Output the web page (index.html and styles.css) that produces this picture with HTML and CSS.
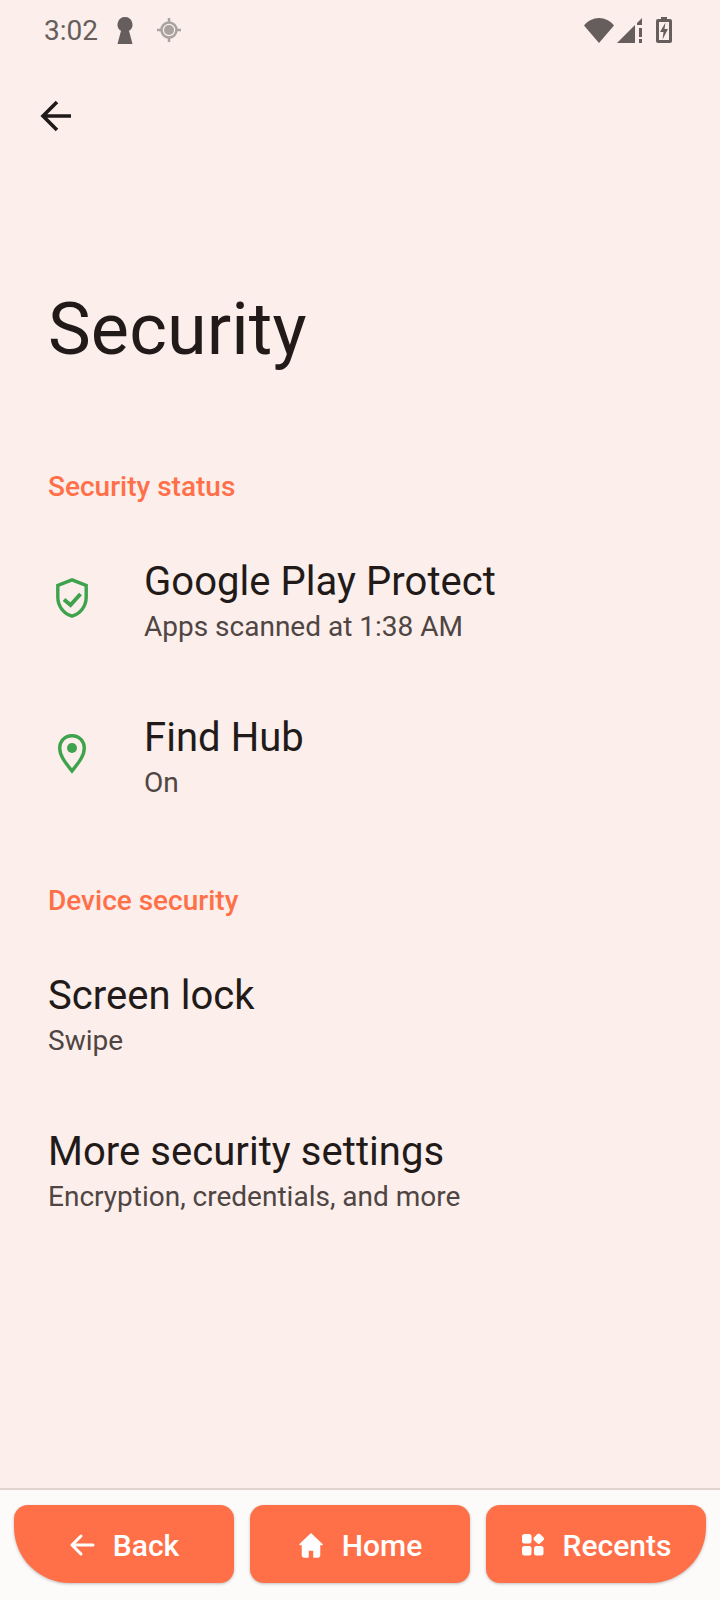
FILE: index.html
```html
<!DOCTYPE html>
<html lang="en">
<head>
    <meta charset="UTF-8">
    <meta name="viewport" content="width=device-width, initial-scale=1.0">
    <title>Security</title>
    <link rel="stylesheet" href="styles.css">
</head>
<body>
    <div class="status-bar">
        <div class="status-left">
            <span class="status-time">3:02</span>
            <svg width="16" height="27" viewBox="0 0 16 27"><path d="M8 0a7.500 7.500 0 0 0-4 13.800L.5 27h15L12 13.800A7.500 7.500 0 0 0 8 0z" fill="#655e5c"/></svg>
            <svg class="gps" width="24" height="24" viewBox="0 0 24 24"><g fill="none" stroke="#a8a2a0" stroke-width="2.500"><circle cx="12" cy="12" r="7.500"/><path d="M12 0v4M12 20v4M0 12h4M20 12h4"/></g><circle cx="12" cy="12" r="5" fill="#a8a2a0"/></svg>
        </div>
        <div class="status-right">
            <svg width="30" height="25" viewBox="0 0 30 25"><path d="M0 7.500C4 2.800 9 0 15 0s11 2.800 15 7.500L15 25z" fill="#655e5c"/></svg>
            <svg width="25" height="25" viewBox="0 0 25 25"><path d="M0 25L18 7v18z" fill="#655e5c"/><path d="M20 5l5-5v7h-5zM22 10h3v9h-3zM22 21h3v4h-3z" fill="#655e5c"/></svg>
            <svg class="battery" width="16" height="26" viewBox="0 0 16 26"><path fill-rule="evenodd" d="M5 0h6v2h3a2 2 0 0 1 2 2v20a2 2 0 0 1-2 2H2a2 2 0 0 1-2-2V4a2 2 0 0 1 2-2h3zM3 5v18h10V5z" fill="#655e5c"/><path d="M9.500 5.500L4 15h3.500L6.500 22.500 12 12H8.500z" fill="#655e5c"/></svg>
        </div>
    </div>

    <div class="app-bar">
        <svg width="36" height="34" viewBox="0 0 36 34"><path d="M33 17H5M19 3L5 17l14 14" fill="none" stroke="#1f1a19" stroke-width="3.600"/></svg>
    </div>

    <main class="content">
        <h1 class="page-title">Security</h1>

        <div class="section-label first">Security status</div>
        <div class="row">
            <div class="row-icon">
                <svg width="32" height="40" viewBox="0 0 32 40"><path d="M16 1.800L1.800 7.500v11.500c0 9.500 6 16.700 14.200 19.200 8.200-2.500 14.200-9.700 14.200-19.200V7.500z" fill="none" stroke="#3fa34d" stroke-width="3.400"/><path d="M8 21.500l6.500 5.500 10-11" fill="none" stroke="#3fa34d" stroke-width="4"/></svg>
            </div>
            <div>
                <div class="row-title">Google Play Protect</div>
                <div class="row-sub">Apps scanned at 1:38 AM</div>
            </div>
        </div>
        <div class="row">
            <div class="row-icon">
                <svg width="28" height="40" viewBox="0 0 28 40"><path d="M14 1.700C6.500 1.700 1.700 7.500 1.700 14c0 8 6 15 12.300 23 6.300-8 12.300-15 12.300-23C26.300 7.500 21.500 1.700 14 1.700z" fill="none" stroke="#3fa34d" stroke-width="3.400"/><circle cx="14" cy="14" r="5" fill="#3fa34d"/></svg>
            </div>
            <div>
                <div class="row-title">Find Hub</div>
                <div class="row-sub">On</div>
            </div>
        </div>

        <div class="section-label">Device security</div>
        <div class="row plain">
            <div>
                <div class="row-title">Screen lock</div>
                <div class="row-sub">Swipe</div>
            </div>
        </div>
        <div class="row plain">
            <div>
                <div class="row-title">More security settings</div>
                <div class="row-sub">Encryption, credentials, and more</div>
            </div>
        </div>
    </main>

    <nav class="bottom-nav">
        <button class="nav-button back">
            <svg width="26" height="24" viewBox="0 0 26 24"><path d="M24 12H3M12 3l-9 9 9 9" fill="none" stroke="#fff" stroke-width="3" stroke-linecap="round" stroke-linejoin="round"/></svg>
            Back
        </button>
        <button class="nav-button">
            <svg width="26" height="26" viewBox="0 0 26 26"><path d="M13 2L2 12.500h2.500V23a2 2 0 0 0 2 2H10v-7h6v7h3.500a2 2 0 0 0 2-2V12.500H24z" fill="#fff" stroke="#fff" stroke-width="1.500" stroke-linejoin="round"/></svg>
            Home
        </button>
        <button class="nav-button recents">
            <svg width="24" height="24" viewBox="0 0 24 24"><g fill="#fff"><rect x="1" y="1" width="9.500" height="9.500" rx="2.500"/><rect x="1" y="13" width="9.500" height="9.500" rx="2.500"/><rect x="13" y="13" width="9.500" height="9.500" rx="2.500"/><rect x="13.500" y="1.500" width="8.500" height="8.500" rx="2" transform="rotate(45 17.750 5.750)"/></g></svg>
            Recents
        </button>
    </nav>
</body>
</html>
```

FILE: styles.css
```css
html, body {
    margin: 0;
    padding: 0;
}
body {
    width: 720px;
    height: 1600px;
    display: flex;
    flex-direction: column;
    font-family: Roboto, sans-serif;
    background-color: #fbeeeb;
    color: #211a18;
    overflow: hidden;
}
.status-bar {
    height: 60px;
    display: flex;
    justify-content: space-between;
    align-items: center;
    padding: 0 48px 0 44px;
    flex-shrink: 0;
}
.status-left, .status-right {
    display: flex;
    align-items: center;
}
.status-time {
    font-size: 28px;
    color: #655e5c;
    margin-right: 19px;
}
.gps {
    margin-left: 24px;
}
.status-right {
    gap: 3px;
}
.battery {
    margin-left: 11px;
}
.app-bar {
    height: 112px;
    display: flex;
    align-items: center;
    padding-left: 38px;
    flex-shrink: 0;
}
.content {
    flex: 1;
    padding: 0 48px;
}
.page-title {
    font-size: 72px;
    font-weight: 400;
    line-height: 88px;
    letter-spacing: 0.1px;
    margin: 114px 0 0 0;
}
.section-label {
    font-size: 28px;
    font-weight: 500;
    line-height: 36px;
    color: #ff7049;
    margin-top: 47px;
    margin-bottom: 19px;
}
.section-label.first {
    margin-top: 95px;
}
.row {
    display: flex;
    align-items: center;
    height: 156px;
}
.row-icon {
    width: 48px;
    margin-right: 48px;
    margin-bottom: 9px;
    display: flex;
    justify-content: center;
}
.row-title {
    font-size: 40px;
    line-height: 50px;
    letter-spacing: 0.05px;
}
.row-sub {
    font-size: 28px;
    line-height: 40px;
    color: #4f4543;
}
.bottom-nav {
    height: 112px;
    flex-shrink: 0;
    display: flex;
    gap: 16px;
    padding: 15px 14px 0;
    box-sizing: border-box;
    background-color: #fdfafa;
    border-top: 2px solid #e2d3d0;
}
.nav-button {
    flex: 1;
    height: 78px;
    display: flex;
    justify-content: center;
    align-items: center;
    gap: 18px;
    border: none;
    border-radius: 14px;
    padding: 2px 0 0 0;
    background-color: #ff7049;
    color: white;
    font-family: Roboto, sans-serif;
    font-size: 30px;
    font-weight: 500;
    box-shadow: 0 1px 3px rgba(0, 0, 0, 0.25);
}
.nav-button.back {
    border-bottom-left-radius: 56px;
}
.nav-button.recents {
    border-bottom-right-radius: 56px;
}
```
